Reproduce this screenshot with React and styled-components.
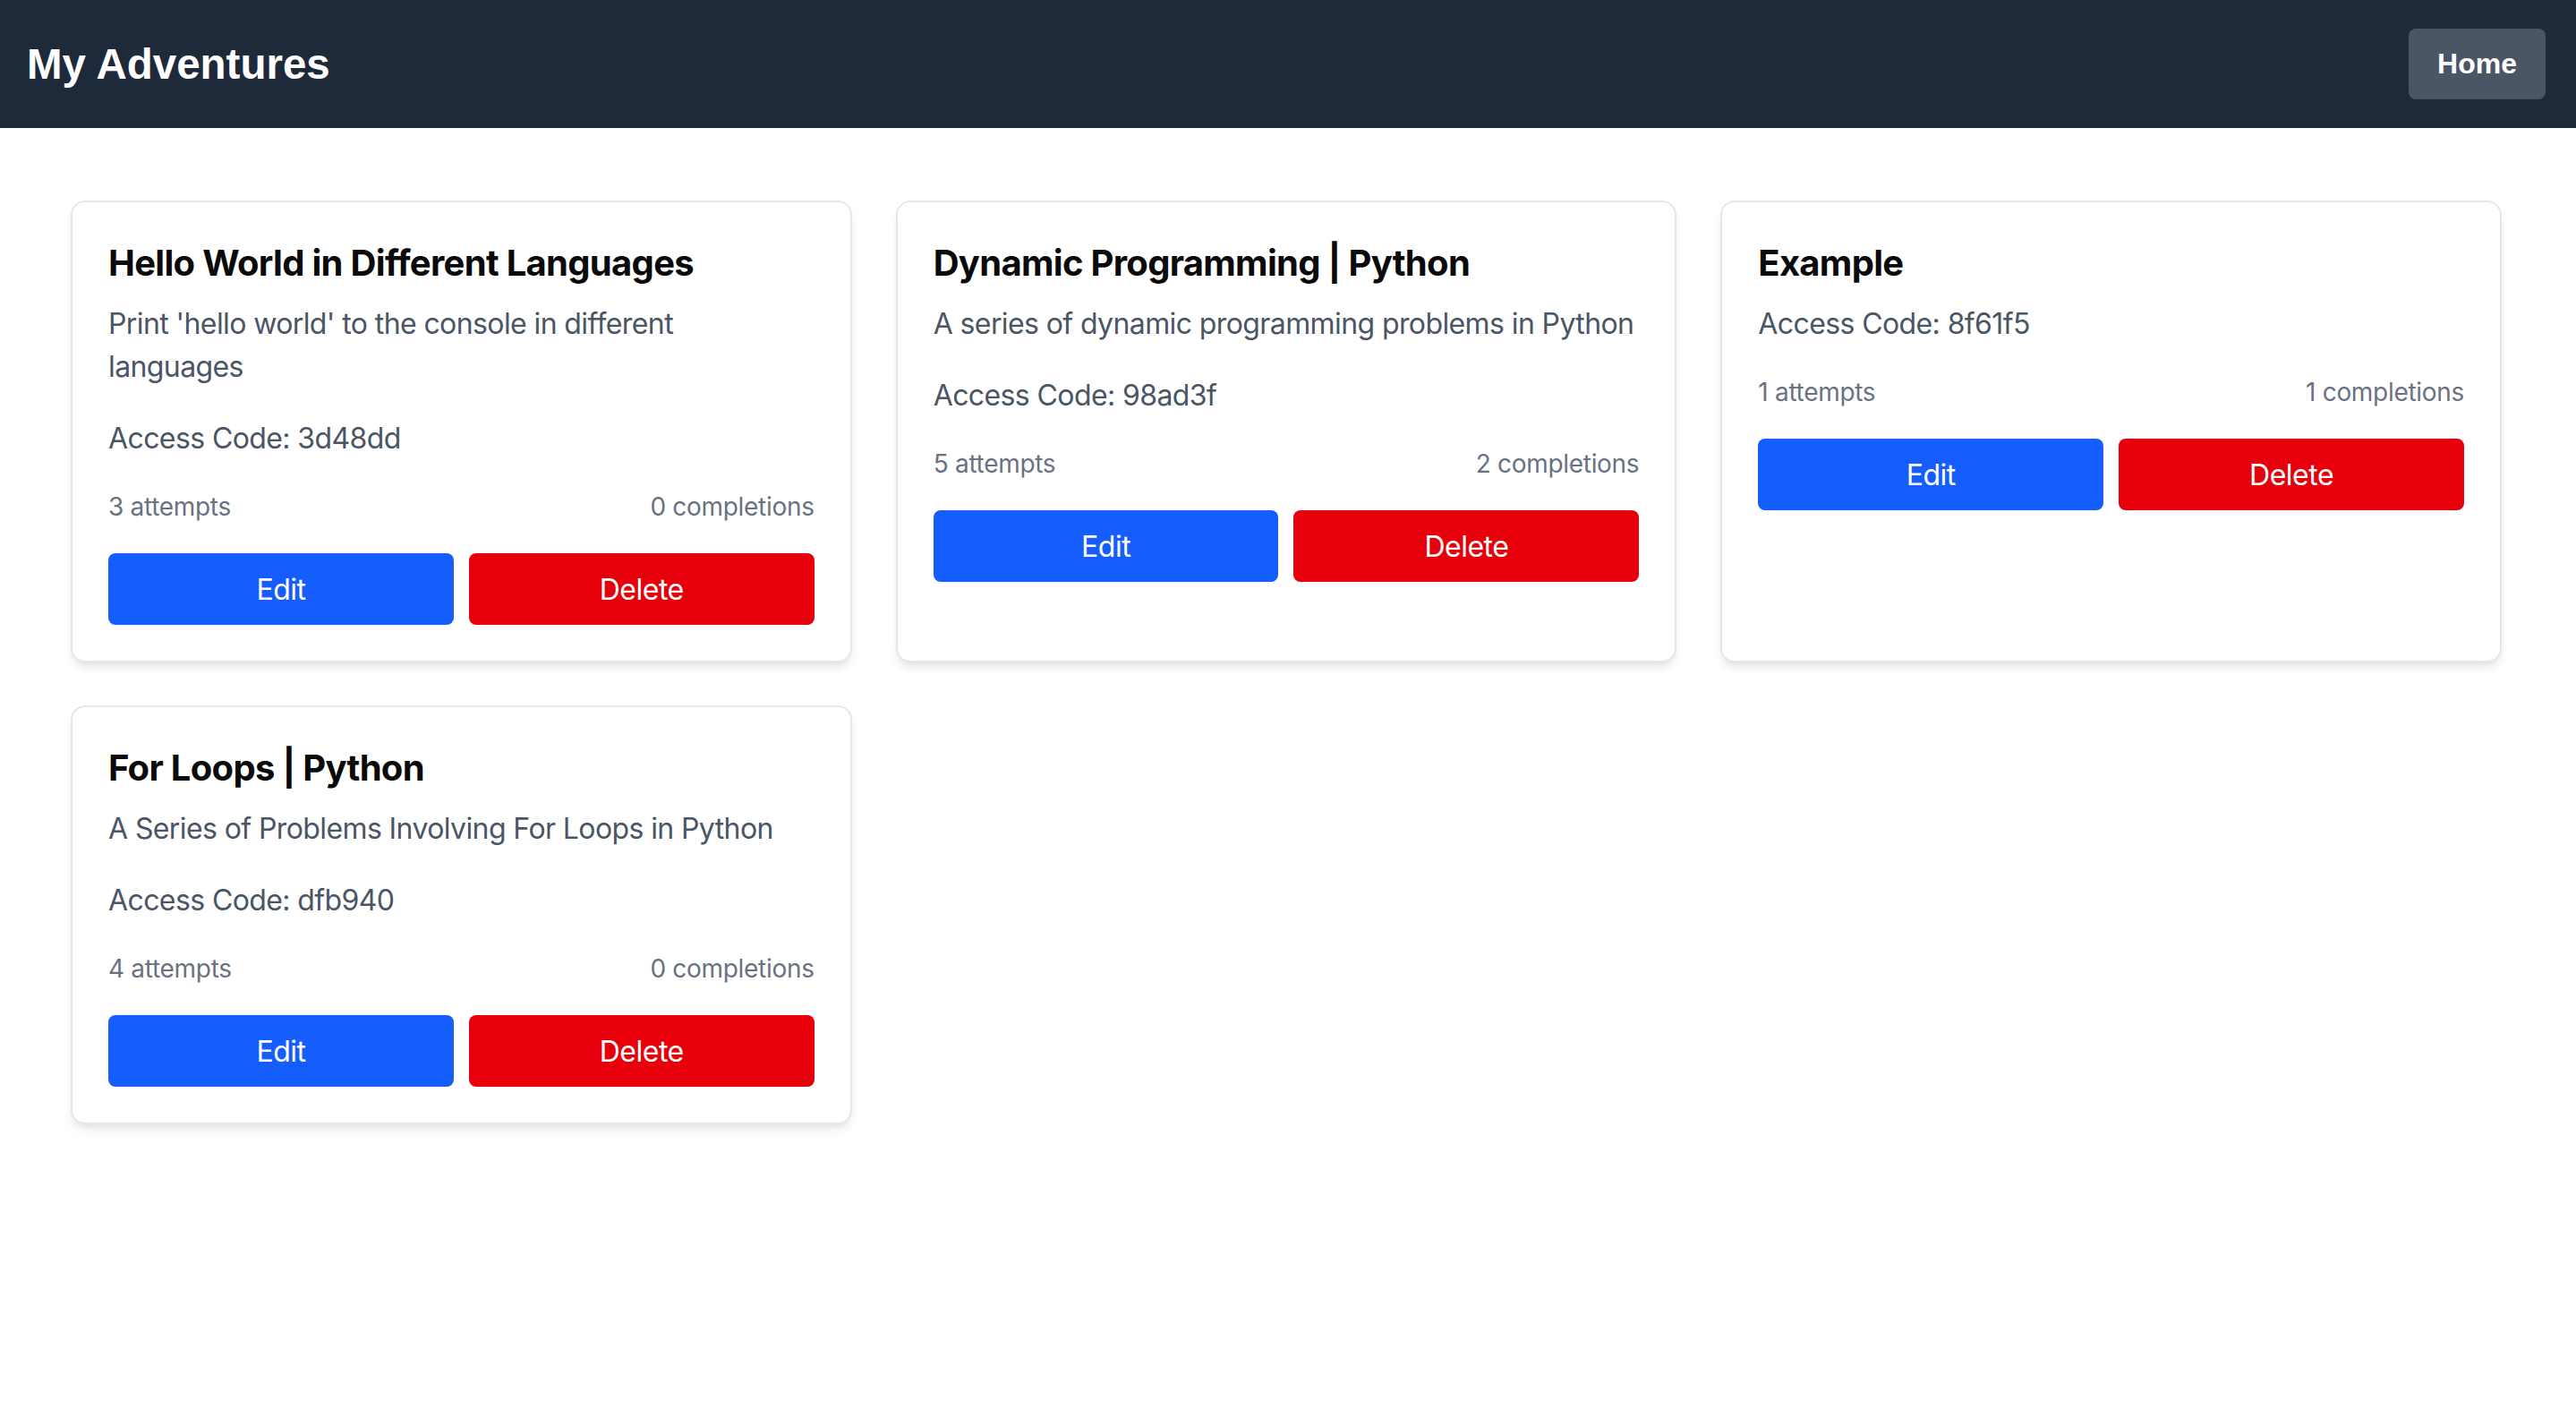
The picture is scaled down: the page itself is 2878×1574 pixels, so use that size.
import React from "react";
import styled, { createGlobalStyle } from "styled-components";

const GlobalStyle = createGlobalStyle`
  * { box-sizing: border-box; }
  body {
    margin: 0;
    background: #ffffff;
    font-family: Inter, "Noto Sans", sans-serif;
  }
`;

const Nav = styled.nav`
  height: 143px;
  background: #1e2939;
  display: flex;
  align-items: center;
  justify-content: space-between;
  padding: 0 34px 0 30px;
`;

const Brand = styled.h1`
  margin: 0;
  color: #ffffff;
  font-family: "Liberation Sans", Arial, sans-serif;
  font-size: 47.5px;
  font-weight: 700;
`;

const HomeButton = styled.button`
  height: 79px;
  padding: 0 32px;
  border: none;
  border-radius: 8px;
  background: #4a5565;
  color: #ffffff;
  font-family: "Liberation Sans", Arial, sans-serif;
  font-size: 32px;
  font-weight: 700;
`;

const Grid = styled.main`
  display: grid;
  grid-template-columns: repeat(3, 1fr);
  gap: 48px 49px;
  padding: 81px 83px 80px 79px;
  align-items: stretch;
`;

const Card = styled.div`
  background: #fff;
  border: 2px solid #e5e7eb;
  border-radius: 16px;
  box-shadow: 0 8px 12px -2px rgba(0, 0, 0, 0.08), 0 4px 8px -4px rgba(0, 0, 0, 0.08);
  padding: 40px;
`;

const Title = styled.h2`
  margin: 0 0 16px;
  font-size: 40px;
  line-height: 56px;
  font-weight: 700;
  color: #0a0a0a;
  letter-spacing: -0.7px;
`;

const Text = styled.p`
  margin: 0 0 32px;
  font-size: 32px;
  line-height: 48px;
  color: #4a5565;
  letter-spacing: -0.6px;
`;

const Stats = styled.div`
  display: flex;
  justify-content: space-between;
  margin-bottom: 32px;
  font-size: 28px;
  line-height: 40px;
  color: #6a7282;
  letter-spacing: -0.3px;
`;

const Actions = styled.div`
  display: grid;
  grid-template-columns: 1fr 1fr;
  gap: 17px;
`;

const Action = styled.button`
  height: 80px;
  border: none;
  border-radius: 8px;
  background: ${(p) => (p.$danger ? "#e7000b" : "#155dfc")};
  color: #ffffff;
  font-family: Inter, "Noto Sans", sans-serif;
  font-size: 32px;
  letter-spacing: -0.5px;
`;

const adventures = [
  {
    title: "Hello World in Different Languages",
    description: "Print 'hello world' to the console in different languages",
    code: "3d48dd",
    attempts: 3,
    completions: 0,
  },
  {
    title: "Dynamic Programming | Python",
    description: "A series of dynamic programming problems in Python",
    code: "98ad3f",
    attempts: 5,
    completions: 2,
  },
  {
    title: "Example",
    description: "",
    code: "8f61f5",
    attempts: 1,
    completions: 1,
  },
  {
    title: "For Loops | Python",
    description: "A Series of Problems Involving For Loops in Python",
    code: "dfb940",
    attempts: 4,
    completions: 0,
  },
];

export default function App() {
  return (
    <>
      <GlobalStyle />
      <Nav>
        <Brand>My Adventures</Brand>
        <HomeButton>Home</HomeButton>
      </Nav>
      <Grid>
        {adventures.map((a) => (
          <Card key={a.code}>
            <Title>{a.title}</Title>
            {a.description && <Text>{a.description}</Text>}
            <Text>Access Code: {a.code}</Text>
            <Stats>
              <span>{a.attempts} attempts</span>
              <span>{a.completions} completions</span>
            </Stats>
            <Actions>
              <Action>Edit</Action>
              <Action $danger>Delete</Action>
            </Actions>
          </Card>
        ))}
      </Grid>
    </>
  );
}
